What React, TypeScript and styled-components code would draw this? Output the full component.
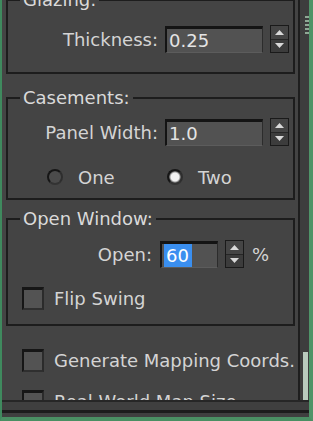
import * as React from 'react';
import styled, {createGlobalStyle} from 'styled-components';

const GlobalStyle = createGlobalStyle`
  html, body {
    margin: 0;
    padding: 0;
    background: #444444;
  }
  body {
    font-family: "DejaVu Sans", Verdana, sans-serif;
  }
`;

const Frame = styled.div`
  width: 313px;
  height: 421px;
  box-sizing: border-box;
  display: flex;
  flex-direction: column;
  background: #444444;
  border-left: 2px solid #3f8a5e;
  border-right: 4px solid #4f9468;
  border-bottom: 4px solid #4a8f63;
  overflow: hidden;
`;

const Body = styled.div`
  display: flex;
  height: 400px;
`;

const Main = styled.div`
  width: 298px;
  box-sizing: border-box;
  border-right: 2px solid #1e1e1e;
  overflow: hidden;
`;

const Content = styled.div`
  margin-top: -11px;
  padding: 0 3px 0 4px;
  display: flex;
  flex-direction: column;
  color: #d4d4d4;
  font-size: 18px;
  line-height: 21px;
`;

const Gutter = styled.div`
  width: 9px;
  background: #3d3d3d;
  display: flex;
  flex-direction: column;
  justify-content: space-between;
  align-items: flex-end;
`;

const Grip = styled.div`
  width: 4px;
  height: 18px;
  margin-top: 16px;
  background: repeating-linear-gradient(#8fa895 0 2px, #3d3d3d 2px 4px);
`;

const Thumb = styled.div`
  width: 5px;
  height: 48px;
  margin-right: 1px;
  background: #b9cabd;
`;

const BottomBar = styled.div`
  border-top: 2px solid #262626;
  padding: 8px 0 4px;
  background: #3f3f3f;
`;

const Rule = styled.div`
  height: 3px;
  background: #1c1c1c;
`;

const Group = styled.fieldset<{$top: number; $pt: number; $pb: number}>`
  margin: ${p => p.$top}px 0 0;
  padding: ${p => p.$pt}px 4px ${p => p.$pb}px 14px;
  border: 2px solid #1d1d1d;
  display: flex;
  flex-direction: column;
  min-width: 0;
`;

const Legend = styled.legend`
  padding: 0 3px;
  margin-left: -2px;
  color: #dadada;
  line-height: 21px;
`;

const FieldRow = styled.div<{$gap?: number}>`
  display: flex;
  align-items: center;
  height: 28px;
  margin-top: ${p => p.$gap ?? 0}px;
`;

const Label = styled.span<{$w: number; $gap: number}>`
  width: ${p => p.$w}px;
  margin-right: ${p => p.$gap}px;
  text-align: right;
  white-space: nowrap;
`;

const Input = styled.div<{$w: number}>`
  width: ${p => p.$w}px;
  height: 27px;
  box-sizing: border-box;
  background: #525252;
  border-top: 3px solid #141414;
  border-left: 2px solid #141414;
  border-right: 1px solid #2c2c2c;
  border-bottom: 1px solid #5c5c5c;
  padding-left: 2px;
  display: flex;
  align-items: center;
  color: #e4e4e4;
  white-space: nowrap;
`;

const Selected = styled.span`
  background: #3a8ff0;
  color: #ffffff;
  padding: 1px 3px 1px 2px;
`;

const SpinBox = styled.div`
  width: 19px;
  height: 28px;
  margin-left: 7px;
  box-sizing: border-box;
  border: 1px solid #1a1a1a;
  background: #3a3a3a;
  display: flex;
  flex-direction: column;
`;

const SpinHalf = styled.div<{$down?: boolean}>`
  flex: 1;
  display: flex;
  align-items: center;
  justify-content: center;
  border-top: ${p => (p.$down ? '1px solid #262626' : 'none')};
  background: ${p => (p.$down ? '#3c3c3c' : '#454545')};
`;

const Unit = styled.span`
  margin-left: 8px;
`;

const RadioRow = styled.div`
  display: flex;
  align-items: center;
  height: 22px;
  margin-top: 20px;
  padding-left: 25px;
`;

const RadioItem = styled.label`
  width: 120px;
  display: flex;
  align-items: center;
  gap: 15px;
`;

const RadioDot = styled.span<{$on?: boolean}>`
  width: 16px;
  height: 16px;
  box-sizing: border-box;
  border-radius: 50%;
  border: 2px solid #161616;
  border-right-color: #2e2e2e;
  border-bottom-color: #333333;
  background: ${p =>
    p.$on
      ? 'radial-gradient(circle, #f2f2f2 0 4px, #9a9a9a 5px, #474747 6px)'
      : '#4b4b4b'};
`;

const CheckRow = styled.label<{$gap: number; $indent?: number}>`
  display: flex;
  align-items: center;
  gap: 10px;
  height: 23px;
  margin-top: ${p => p.$gap}px;
  padding-left: ${p => p.$indent ?? 0}px;
  white-space: nowrap;
`;

const CheckBox = styled.span`
  width: 22px;
  height: 23px;
  box-sizing: border-box;
  border: 2px solid #161616;
  border-top-width: 3px;
  border-right-color: #2b2b2b;
  border-bottom-color: #2f2f2f;
  background: #535353;
  flex: none;
`;

const Arrow = ({down}: {down?: boolean}) => (
  <svg width="9" height="5" viewBox="0 0 9 5">
    <polygon points={down ? '0,0 9,0 4.5,5' : '4.5,0 9,5 0,5'} fill="#d9d9d9" />
  </svg>
);

const Spinner = () => (
  <SpinBox>
    <SpinHalf>
      <Arrow />
    </SpinHalf>
    <SpinHalf $down>
      <Arrow down />
    </SpinHalf>
  </SpinBox>
);

export default function App() {
  return (
    <>
      <GlobalStyle />
      <Frame>
        <Body>
          <Main>
            <Content>
              <Group $top={0} $pt={15} $pb={19}>
                <Legend>Glazing:</Legend>
                <FieldRow>
                  <Label $w={136} $gap={7}>Thickness:</Label>
                  <Input $w={98}>0.25</Input>
                  <Spinner />
                </FieldRow>
              </Group>

              <Group $top={13} $pt={10} $pb={10}>
                <Legend>Casements:</Legend>
                <FieldRow>
                  <Label $w={136} $gap={7}>Panel Width:</Label>
                  <Input $w={98}>1.0</Input>
                  <Spinner />
                </FieldRow>
                <RadioRow>
                  <RadioItem>
                    <RadioDot />
                    One
                  </RadioItem>
                  <RadioItem>
                    <RadioDot $on />
                    Two
                  </RadioItem>
                </RadioRow>
              </Group>

              <Group $top={8} $pt={11} $pb={14}>
                <Legend>Open Window:</Legend>
                <FieldRow>
                  <Label $w={130} $gap={8}>Open:</Label>
                  <Input $w={58}>
                    <Selected>60</Selected>
                  </Input>
                  <Spinner />
                  <Unit>%</Unit>
                </FieldRow>
                <CheckRow $gap={19}>
                  <CheckBox />
                  Flip Swing
                </CheckRow>
              </Group>

              <CheckRow $gap={23} $indent={16}>
                <CheckBox />
                Generate Mapping Coords.
              </CheckRow>
              <CheckRow $gap={18} $indent={16}>
                <CheckBox />
                Real-World Map Size
              </CheckRow>
            </Content>
          </Main>
          <Gutter>
            <Grip />
            <Thumb />
          </Gutter>
        </Body>
        <BottomBar>
          <Rule />
        </BottomBar>
      </Frame>
    </>
  );
}
